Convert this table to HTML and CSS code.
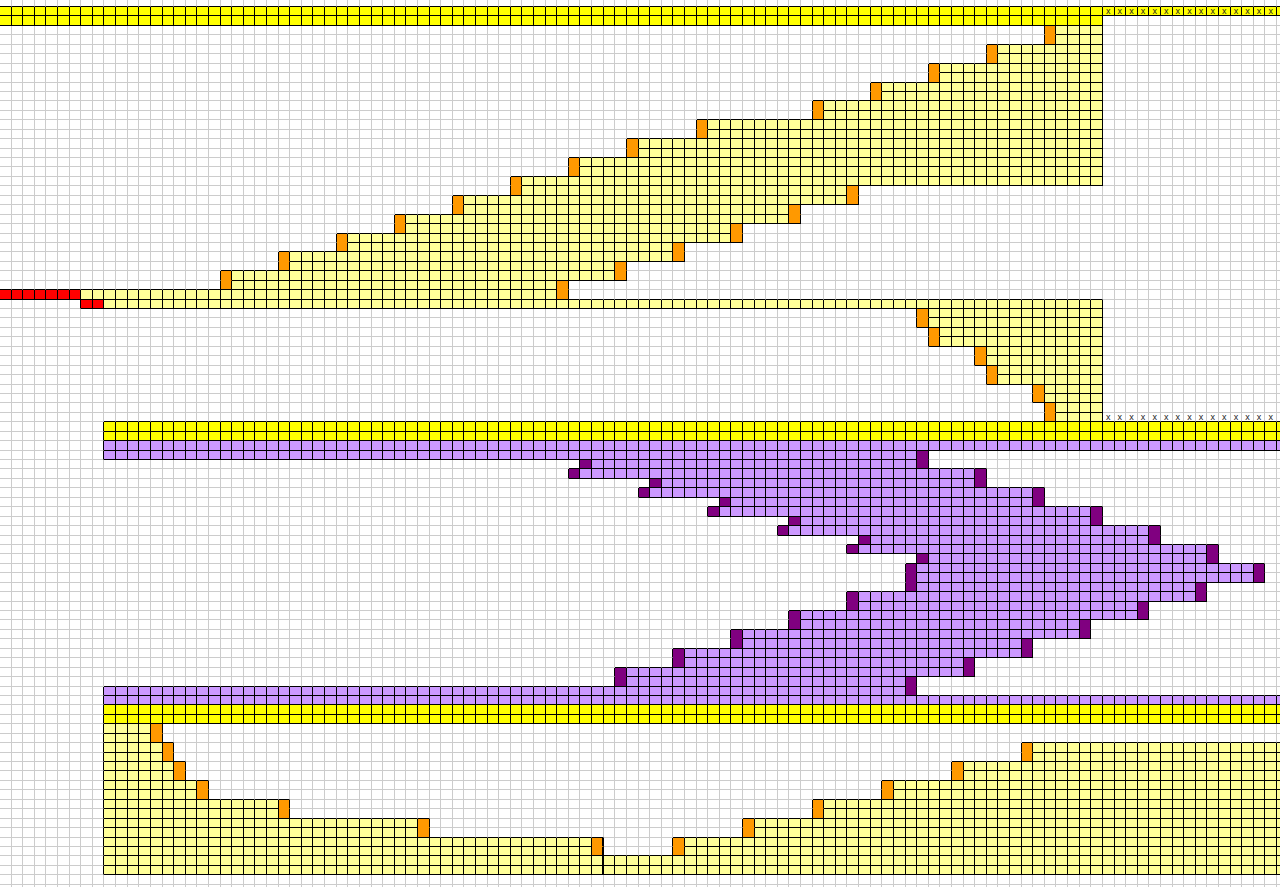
FILE: index.html
```html
<!DOCTYPE html>
<html lang="en">
<head>
<meta charset="utf-8">
<title>Sheet</title>
<link rel="stylesheet" href="styles.css">
</head>
<body>
<main class="sheet" id="sheet"></main>
<script src="script.js"></script>
</body>
</html>
```

FILE: styles.css
```css
html, body {
  margin: 0;
  padding: 0;
  overflow: hidden;
  background: #ffffff;
}
body {
  width: 1280px;
  height: 887px;
  font-family: "Liberation Sans", Arial, sans-serif;
}
.sheet {
  display: grid;
  grid-template-columns: repeat(111, 11.62px);
  grid-template-rows: 7px repeat(94, 9.45px);
}
.c {
  box-sizing: border-box;
  border-right: 1px solid #cccccc;
  border-bottom: 1px solid #cccccc;
  font-size: 9px;
  line-height: 8px;
  text-align: center;
  color: #222222;
}
.c.br { border-right-color: #000000; }
.c.bb { border-bottom-color: #000000; }
.c.k { border-color: #000000; }
.c.thick { border-right: 2px solid #000000; }
.yellow { background: #ffff00; }
.pale { background: #ffff99; }
.orange { background: #ff9900; }
.red { background: #ff0000; }
.lilac { background: #cc99ff; }
.plum { background: #800080; }
.c.orange.joined { border-bottom-color: #ff9900; }
.c.plum.joined { border-bottom-color: #800080; }
```

FILE: script.js
```js
(function () {
  var COLS = 111, ROWS = 95;
  var g = [], m = [];
  for (var i = 0; i < ROWS; i++) {
    g.push(new Array(COLS).fill(''));
    m.push(new Array(COLS).fill(false));
  }
  function f(r1, r2, c1, c2, k) {
    for (var r = r1; r <= r2; r++)
      for (var c = c1; c <= c2; c++)
        if (r >= 0 && r < ROWS && c >= 0 && c < COLS) g[r][c] = k;
  }
  function s(r, c, k) { f(r, r, c, c, k); }

  // top band
  f(1, 1, 0, 110, 'yellow');
  f(2, 2, 0, 94, 'yellow');
  for (var c = 95; c <= 109; c++) { m[1][c] = true; m[44][c] = true; }

  // upper staircase shape
  var leftSteps = [[3,90],[5,85],[7,80],[9,75],[11,70],[13,60],[15,54],[17,49],[19,44],[21,39],[23,34],[25,29],[27,24],[29,19]];
  var rightSteps = {20:73,21:73,22:68,23:68,24:63,25:63,26:58,27:58,28:53,29:53,30:48,31:48};
  leftSteps.forEach(function (st) {
    [st[0], st[0] + 1].forEach(function (rr) {
      var R = rightSteps[rr];
      if (R) { f(rr, rr, st[1] + 1, R - 1, 'pale'); s(rr, R, 'orange'); }
      else { f(rr, rr, st[1] + 1, 94, 'pale'); }
      s(rr, st[1], 'orange');
    });
  });
  f(31, 31, 0, 6, 'red'); f(31, 31, 7, 47, 'pale'); s(31, 48, 'orange');
  f(32, 32, 7, 8, 'red'); f(32, 32, 9, 94, 'pale');

  // lower-right triangle
  [[33,79],[35,80],[37,84],[39,85],[41,89],[43,90]].forEach(function (st) {
    for (var rr = st[0]; rr <= st[0] + 1; rr++) { s(rr, st[1], 'orange'); f(rr, rr, st[1] + 1, 94, 'pale'); }
  });

  // middle bands
  f(45, 46, 9, 110, 'yellow');
  f(47, 47, 9, 110, 'lilac');
  var pr = [
    [48,null,79],[49,50,79],[50,49,84],[51,56,84],[52,55,89],[53,62,89],[54,61,94],[55,68,94],
    [56,67,99],[57,74,99],[58,73,104],[59,79,104],[60,78,108],[61,78,108],[62,78,103],[63,73,103],
    [64,73,98],[65,68,98],[66,68,93],[67,63,93],[68,63,88],[69,58,88],[70,58,83],[71,53,83],
    [72,53,78],[73,null,78]
  ];
  pr.forEach(function (p) {
    var start = p[1] === null ? 9 : p[1] + 1;
    if (p[1] !== null) s(p[0], p[1], 'plum');
    f(p[0], p[0], start, p[2] - 1, 'lilac');
    s(p[0], p[2], 'plum');
  });
  f(74, 74, 9, 110, 'lilac');
  f(75, 76, 9, 110, 'yellow');

  // bottom shape
  [[77,13],[79,14],[81,15],[83,17],[85,24],[87,36],[89,51]].forEach(function (st) {
    for (var rr = st[0]; rr <= st[0] + 1; rr++) { f(rr, rr, 9, st[1] - 1, 'pale'); s(rr, st[1], 'orange'); }
  });
  [[79,88],[81,82],[83,76],[85,70],[87,64],[89,58]].forEach(function (st) {
    for (var rr = st[0]; rr <= st[0] + 1; rr++) { s(rr, st[1], 'orange'); f(rr, rr, st[1] + 1, 110, 'pale'); }
  });
  f(91, 92, 9, 110, 'pale');

  var sheet = document.getElementById('sheet');
  var frag = document.createDocumentFragment();
  for (var r = 0; r < ROWS; r++) {
    for (var c2 = 0; c2 < COLS; c2++) {
      var d = document.createElement('div');
      var k = g[r][c2];
      var cls = 'c';
      if (k) {
        cls += ' ' + k + ' k';
        if ((k === 'orange' || k === 'plum') && r + 1 < ROWS && g[r + 1][c2] === k) cls += ' joined';
      } else {
        if (c2 + 1 < COLS && g[r][c2 + 1]) cls += ' br';
        if (r + 1 < ROWS && g[r + 1][c2]) cls += ' bb';
      }
      if (c2 === 51 && r >= 89 && r <= 92) cls += ' thick';
      d.className = cls;
      if (m[r][c2]) d.textContent = 'x';
      frag.appendChild(d);
    }
  }
  sheet.appendChild(frag);
})();
```
